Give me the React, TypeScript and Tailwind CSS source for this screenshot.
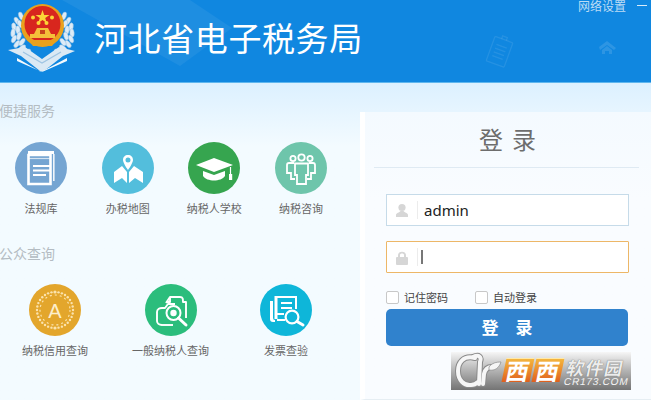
import React from 'react';

const cjk = "font-['Noto_Sans_CJK_SC','Liberation_Sans',sans-serif]";

const leaves = [
  [21, 16, -20], [17, 21, -30], [14, 27, -10], [13, 33, 5], [14, 39, 25], [17, 44, 40], [22, 48, 55], [27, 52, 60],
  [20, 24, -25], [18, 30, -5], [19, 36, 15], [22, 42, 35],
];

const Emblem = () => (
  <svg width="90" height="78" viewBox="0 0 90 78" className="absolute left-0 top-0">
    {/* wreath */}
    <g fill="#dcebf7" stroke="#8fbde0" strokeWidth="0.5">
      {leaves.map(([x, y, r], i) => (
        <ellipse key={`l${i}`} cx={x} cy={y} rx="2.2" ry="4.2" transform={`rotate(${r} ${x} ${y})`} />
      ))}
      {leaves.map(([x, y, r], i) => (
        <ellipse key={`r${i}`} cx={85 - x} cy={y} rx="2.2" ry="4.2" transform={`rotate(${-r} ${85 - x} ${y})`} />
      ))}
    </g>
    {/* ribbon */}
    <path d="M8 50 L25 47 L42 59 L59 47 L75 51 L63 56 L44 71 L40 71 L21 56 Z" fill="#dbe9f4" />
    <path d="M17 58 L41 72 L67 58 L67 61 L42 72 L17 61 Z" fill="#f5fafe" />
    <path d="M23 52 L42 63 L61 52" fill="none" stroke="#9fc4e2" strokeWidth="1.2" />
    {/* seal */}
    <circle cx="42.5" cy="25.5" r="21.5" fill="#e9a11d" />
    <circle cx="42.5" cy="24" r="18" fill="#d8261e" />
    <polygon points="42.5,10 44.2,15 49.5,15 45.2,18 46.8,23 42.5,20 38.2,23 39.8,18 35.5,15 40.8,15" fill="#fbd437" />
    <circle cx="33" cy="17.5" r="2" fill="#fbd437" />
    <circle cx="38.5" cy="23" r="2" fill="#fbd437" />
    <circle cx="46.5" cy="23" r="2" fill="#fbd437" />
    <circle cx="52" cy="17.5" r="2" fill="#fbd437" />
    <path d="M34 34 L37 28 H48 L51 34 H55 V38 H30 V34 Z" fill="#f4c03a" />
    <path d="M28 40 H57 L52 46 H33 Z" fill="#e9a11d" />
    <rect x="40" y="30" width="5" height="4" fill="#c8461c" />
  </svg>
);

const HeaderDecor = () => (
  <svg width="651" height="82" viewBox="0 0 651 82" className="absolute left-0 top-0">
    <path d="M62 0 H190 L232 28 L180 66 Z" fill="#ffffff" opacity="0.06" />
    <g transform="rotate(20 500 52)" fill="none" stroke="#ffffff" strokeOpacity="0.09" strokeWidth="1.3">
      <rect x="490" y="39" width="19" height="26" rx="1" />
      <path d="M494 46 H505 M494 50 H505 M494 54 H505 M494 58 H505" />
      <path d="M497 39 V36 H502 V39" />
    </g>
    <path d="M607 41 L616 48 L614 50 L607 45 L600 50 L599 47 Z M602 50 L607 46 L612 50 V54 H609 V51 H605 V54 H602 Z" fill="#ffffff" opacity="0.12" />
  </svg>
);

const BookIcon = () => (
  <svg viewBox="0 0 52 52" className="size-full">
    <circle cx="26" cy="26" r="26" fill="#75a5d2" />
    <path d="M13 9 H39 V12 H13 Z" fill="#fff" />
    <path d="M13.5 13 H35.5 V42 H13.5 Z" fill="none" stroke="#fff" strokeWidth="2.6" />
    <rect x="38" y="12" width="1.6" height="27" fill="#fff" opacity="0.9" />
    <path d="M14 16.5 H35" stroke="#fff" strokeWidth="1.2" opacity="0.7" />
    <path d="M18 24 H35 M18 28.5 H35 M18 33 H31" stroke="#fff" strokeWidth="2" />
  </svg>
);

const MapIcon = () => (
  <svg viewBox="0 0 52 52" className="size-full">
    <circle cx="26" cy="26" r="26" fill="#53bedc" />
    <path d="M26 13 C23 13 21 15 21 18 C21 21 26 28 26 28 C26 28 31 21 31 18 C31 15 29 13 26 13 Z M26 15.5 A2.5 2.5 0 1 1 26 20.5 A2.5 2.5 0 1 1 26 15.5 Z" fill="#fff" fillRule="evenodd" />
    <path d="M12 30 L20 24 L25 30 V41 L20 36 L12 41 Z" fill="#fff" />
    <path d="M27 30 L32 24 L41 30 V41 L33 36 L27 41 Z" fill="#fff" />
  </svg>
);

const CapIcon = () => (
  <svg viewBox="0 0 52 52" className="size-full">
    <circle cx="26" cy="26" r="26" fill="#36a54f" />
    <path d="M8 23 L26 16 L45 23 L26 30 Z" fill="#fff" />
    <path d="M15 29 L26 33 L37 29 V34 C33 40 19 40 15 34 Z" fill="#fff" />
    <path d="M42.5 25 V32" stroke="#fff" strokeWidth="1.2" />
    <rect x="41" y="32" width="3.2" height="6" fill="#fff" />
  </svg>
);

const PeopleIcon = () => (
  <svg viewBox="0 0 52 52" className="size-full">
    <circle cx="26" cy="26" r="26" fill="#6ec5ab" />
    <g fill="none" stroke="#fff" strokeWidth="1.8">
      <circle cx="26.5" cy="15.5" r="3.2" />
      <circle cx="18" cy="16.5" r="2.6" />
      <circle cx="35" cy="16.5" r="2.6" />
      <path d="M20 21.5 H33 V33 H31 V42 H22 V33 H20 Z" />
      <path d="M19 21 H14 Q12 21 12 23 V31 H16 V37 H20" />
      <path d="M34 21 H38 Q40 21 40 23 V31 H36 V37 H32" />
    </g>
  </svg>
);

const CreditIcon = () => {
  const dots = [];
  for (let i = 0; i < 32; i++) {
    const a = (i / 32) * Math.PI * 2;
    dots.push(
      <circle
        key={i}
        cx={26 + Math.cos(a) * 18}
        cy={26 + Math.sin(a) * 18}
        r={i === 8 || i === 24 ? 1.6 : 1.2}
        fill="#fbe3ae"
      />
    );
  }
  return (
    <svg viewBox="0 0 52 52" className="size-full">
      <circle cx="26" cy="26" r="26" fill="#e3a62c" />
      {dots}
      <circle cx="26" cy="26" r="15" fill="none" stroke="#fbe3ae" strokeWidth="1.2" strokeDasharray="2 3" />
      <text x="26" y="33.5" textAnchor="middle" fontSize="20" fill="#fdeecb" fontFamily="Liberation Sans, sans-serif">A</text>
    </svg>
  );
};

const TaxpayerIcon = () => (
  <svg viewBox="0 0 52 52" className="size-full">
    <circle cx="26" cy="26" r="26" fill="#2bbd7c" />
    <g fill="none" stroke="#fff" strokeWidth="1.9" strokeLinejoin="round">
      <path d="M21 19 L25 13 H35 C38 13 38 15 38 18 H41 V34" />
      <path d="M25 13 V18 H21" />
      <path d="M17 41 C14 41 12 39 12 37 V28 C12 25 15 24 17 24 H20 L23 20 H30" />
      <path d="M17 41 H28" />
      <circle cx="28.5" cy="29" r="7" strokeWidth="2" />
    </g>
    <circle cx="28.5" cy="29" r="3.2" fill="#fff" />
    <path d="M33.5 34 L41 41" stroke="#fff" strokeWidth="3" strokeLinecap="round" />
  </svg>
);

const InvoiceIcon = () => (
  <svg viewBox="0 0 52 52" className="size-full">
    <circle cx="26" cy="26" r="26" fill="#0eb6d9" />
    <path d="M10 17 H13 V34 Q13 36 15 36 V38 H13 Q10 38 10 35 Z" fill="#fff" />
    <path d="M14.5 12 H17.5 V35 H14.5 Z" fill="#fff" />
    <g fill="none" stroke="#fff" strokeWidth="2">
      <path d="M17 13 H36 V25" />
      <path d="M21 19 H32 M21 24 H32" />
      <path d="M17 30 H24 M17 36 H25" />
      <circle cx="32" cy="33" r="6.4" strokeWidth="2.2" />
    </g>
    <path d="M37 37.5 L43 41" stroke="#fff" strokeWidth="3" strokeLinecap="round" />
  </svg>
);

const items1 = [
  { label: '法规库', icon: <BookIcon /> },
  { label: '办税地图', icon: <MapIcon /> },
  { label: '纳税人学校', icon: <CapIcon /> },
  { label: '纳税咨询', icon: <PeopleIcon /> },
];

const items2 = [
  { label: '纳税信用查询', icon: <CreditIcon /> },
  { label: '一般纳税人查询', icon: <TaxpayerIcon /> },
  { label: '发票查验', icon: <InvoiceIcon /> },
];

const Shortcut = ({ label, icon, width }: { label: string; icon: React.ReactNode; width: string }) => (
  <div className={`flex flex-col items-center ${width}`}>
    <div className="size-[52px]">{icon}</div>
    <span className="mt-[6px] text-[11px] leading-[16px] text-[#666] whitespace-nowrap">{label}</span>
  </div>
);

const Watermark = () => (
  <div className="absolute left-[451px] top-[352px] h-[38px] w-[180px] bg-gradient-to-b from-[#f6f6f6] via-[#b2b2b2] to-[#747474]">
    <svg width="60" height="38" viewBox="0 0 60 38" className="absolute left-0 top-0">
      <g fill="none" strokeLinecap="round">
        <g stroke="#8a8a8a" strokeWidth="6">
          <path d="M24 6 C12 3 7 11 7 19 C7 28 13 34 20 33 C23 33 25 32 27 30" />
          <path d="M22 5 C28 2 31 5 29 10 L28 32" />
          <path d="M32 32 L33 22 C34 17 37 15 41 15" />
        </g>
        <g stroke="#f6f6f6" strokeWidth="4">
          <path d="M24 6 C12 3 7 11 7 19 C7 28 13 34 20 33 C23 33 25 32 27 30" />
          <path d="M22 5 C28 2 31 5 29 10 L28 32" />
          <path d="M32 32 L33 22 C34 17 37 15 41 15" />
        </g>
      </g>
      <path d="M38 15 C41 11 45 10 50 10 C48 16 44 19 38 18 Z" fill="#f6f6f6" stroke="#8a8a8a" strokeWidth="0.7" />
    </svg>
    <div className="absolute left-[53px] top-[6px] flex h-[24px] gap-[2px] skew-x-[-12deg]">
      <span className={`flex w-[28px] items-center justify-center border-t border-[#ffe9a8] bg-gradient-to-b from-[#f3b53e] to-[#df5f1c] text-[23px] font-bold leading-none text-white ${cjk}`}>西</span>
      <span className={`flex w-[28px] items-center justify-center border-t border-[#ffe9a8] bg-gradient-to-b from-[#f3b53e] to-[#df5f1c] text-[23px] font-bold leading-none text-white ${cjk}`}>西</span>
    </div>
    <div className={`absolute left-[116px] top-[5px] skew-x-[-12deg] text-[18px] font-bold leading-[20px] tracking-[1px] whitespace-nowrap text-[#ececec] [text-shadow:0_0_1px_#555] ${cjk}`}>软件园</div>
    <div className="absolute left-[113px] top-[24px] skew-x-[-12deg] text-[10px] leading-[12px] tracking-[0.8px] whitespace-nowrap text-[#f4f4f4] font-['Liberation_Sans',sans-serif]">CR173.COM</div>
  </div>
);

export default function App() {
  return (
    <div className={`relative flex h-[400px] w-[651px] flex-col overflow-hidden bg-[#f3fbff] ${cjk}`}>
      <header className="relative h-[83px] shrink-0 border-b border-[#5fb6ee] bg-[#1087e0]">
        <HeaderDecor />
        <Emblem />
        <h1 className="absolute left-[94px] top-[13px] text-[33px] leading-[48px] tracking-[0.6px] font-normal text-white whitespace-nowrap">河北省电子税务局</h1>
        <span className="absolute left-[578px] top-0 text-[12px] leading-[12px] text-[#bcdcf5]">网络设置</span>
        <span className="absolute left-[637px] top-[5px] h-px w-[10px] bg-[#d7ebfa]" />
      </header>

      <div className="flex flex-1 bg-gradient-to-b from-[#dcf0ff] to-[#f3fbff] to-[20%]">
        <main className="w-[360px] shrink-0">
          <h2 className="mt-[17px] -ml-px text-[14px] leading-[20px] text-[#b4bcc2]">便捷服务</h2>
          <div className="mt-[22px] flex gap-[4.67px]">
            {items1.map((it) => (
              <Shortcut key={it.label} label={it.label} icon={it.icon} width="w-[82px]" />
            ))}
          </div>
          <h2 className="mt-[27px] -ml-px text-[14px] leading-[20px] text-[#b4bcc2]">公众查询</h2>
          <div className="mt-[21px] flex gap-[5.5px]">
            {items2.map((it) => (
              <Shortcut key={it.label} label={it.label} icon={it.icon} width="w-[110px]" />
            ))}
          </div>
        </main>

        <section className="mt-[29px] flex-1 border-b border-l-[5px] border-[#e6eef3] border-l-[#ffffff] bg-gradient-to-b from-[#f4faff] to-[#f9fcff] to-[30%]">
          <h2 className="pl-[8px] pt-[11px] text-center text-[24px] leading-[32px] tracking-[9px] text-[#6d6d6d]">登录</h2>
          <div className="mx-[9px] mt-[12px] h-px w-[265px] bg-[#dfeaf3]" />
          <div className="ml-[21px] mt-[26px] w-[243px]">
            <div className="flex h-[32px] items-center border border-[#c6dbe9] bg-white">
              <svg width="14" height="14" viewBox="0 0 14 14" className="ml-[8px] shrink-0">
                <circle cx="7" cy="4.5" r="3.6" fill="#d6d6d6" />
                <path d="M1 14 V12 C1 10 4.5 9.5 5.5 8 H8.5 C9.5 9.5 13 10 13 12 V14 Z" fill="#d6d6d6" />
              </svg>
              <div className="ml-[8px] h-[18px] w-px bg-[#ececec]" />
              <span className="ml-[6px] text-[15px] text-[#222] font-['Noto_Sans','Liberation_Sans',sans-serif]">admin</span>
            </div>
            <div className="mt-[15px] flex h-[32px] items-center rounded-[1px] border border-[#edb767] bg-white">
              <svg width="14" height="15" viewBox="0 0 14 15" className="ml-[8px] shrink-0">
                <path d="M3 7 V5 C3 0.5 11 0.5 11 5 V7 H9 V5 C9 3 5 3 5 5 V7 Z" fill="#d6d6d6" />
                <rect x="1" y="7" width="12" height="8" rx="1" fill="#d6d6d6" />
              </svg>
              <div className="ml-[8px] h-[18px] w-px bg-[#ececec]" />
              <div className="ml-[3px] h-[14px] w-[2px] bg-[#777]" />
            </div>
          </div>
          <div className="ml-[21px] mt-[18px] flex h-[13px] items-center text-[11px] leading-[13px] text-[#444]">
            <span className="size-[13px] rounded-[2px] border border-[#c8c8c8] bg-white" />
            <span className="ml-[5px]">记住密码</span>
            <span className="ml-[27px] size-[13px] rounded-[2px] border border-[#c8c8c8] bg-white" />
            <span className="ml-[5px]">自动登录</span>
          </div>
          <button className="ml-[21px] mt-[5px] flex h-[37px] w-[242px] items-center justify-center rounded-[5px] bg-[#3082cd] pb-[2px] text-[17px] font-bold tracking-[17px] text-white">
            <span className="pl-[17px]">登录</span>
          </button>
        </section>
      </div>
      <Watermark />
    </div>
  );
}
